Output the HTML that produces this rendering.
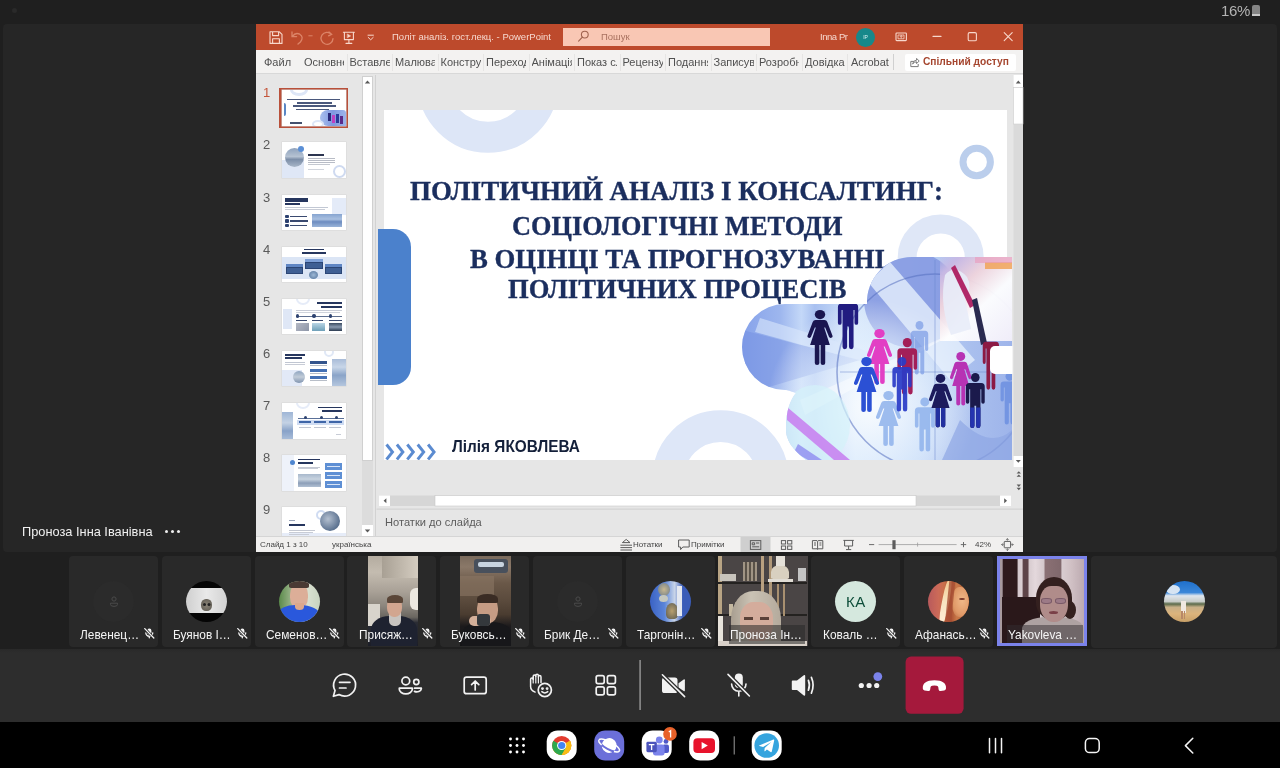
<!DOCTYPE html>
<html><head><meta charset="utf-8">
<style>
*{box-sizing:border-box;margin:0;padding:0}
html,body{width:1280px;height:768px;overflow:hidden;background:#1f1f1f;font-family:"Liberation Sans",sans-serif;}
.abs{position:absolute}
body>*{will-change:transform}
svg{position:absolute;overflow:visible}
#stage{position:absolute;left:3px;top:23.5px;width:1274px;height:528px;background:#262626;border-radius:4px}
#batt{position:absolute;left:1221px;top:2px;color:#b4b4b4;font-size:15px;letter-spacing:-0.3px}
#ppt{position:absolute;left:256px;top:25px;width:767px;height:527px;background:#e6e6e6;overflow:hidden}
#title{position:absolute;left:0;top:0;width:767px;height:25px;background:#bd4a2c;color:#f6d9cf;font-size:9.5px}
#title span{position:absolute;white-space:nowrap}
#tabs{position:absolute;left:0;top:25px;width:767px;height:24px;background:#f3f2f1;color:#505050;font-size:11px;border-bottom:1px solid #d8d8d8}
#tabs span{position:absolute;top:6px;white-space:nowrap;overflow:hidden;height:14px}
#status{position:absolute;left:0;top:511px;width:767px;height:16px;background:#f1f0ef;color:#444;font-size:8px;border-top:1px solid #d5d5d5}
#status span{position:absolute;white-space:nowrap;top:3px}
#slide{position:absolute;left:128px;top:85px;width:623px;height:350px;background:#fff;overflow:hidden}
.tl{font-family:"Liberation Serif",serif;font-weight:bold;color:#1b2e5e;-webkit-text-stroke:0.35px #1b2e5e;position:absolute;white-space:nowrap;transform-origin:0 0;font-size:28px;line-height:28px}
.tile{position:absolute;top:556px;width:89px;height:91px;background:#292929;border-radius:4px;overflow:hidden}
.nm{position:absolute;left:11px;top:626.5px;color:#f4f4f4;font-size:12.2px;white-space:nowrap;line-height:16px;transform:scaleX(0.975);transform-origin:0 0}
#bar{position:absolute;left:0;top:649px;width:1280px;height:73px;background:linear-gradient(#292929,#2d2d2d 4px)}
#nav{position:absolute;left:0;top:722px;width:1280px;height:46px;background:#000}
</style></head><body>
<div id="batt">16%</div>
<div class="abs" style="left:1252px;top:5px;width:8px;height:11px;background:#858585;border-radius:2px 2px 1px 1px"></div>
<div class="abs" style="left:1252px;top:14px;width:8px;height:2px;background:#c8c8c8"></div>
<div class="abs" style="left:12px;top:8px;width:5px;height:5px;border-radius:50%;background:#2a2a2a"></div>
<div id="stage"></div>
<div class="abs" style="left:22px;top:524px;color:#f0f0f0;font-size:12.8px;line-height:16px;white-space:nowrap" id="pres">Проноза Інна Іванівна</div>
<div class="abs" style="left:164.6px;top:529.8px;width:3.4px;height:3.4px;border-radius:50%;background:#eee;box-shadow:6px 0 0 #eee,12px 0 0 #eee"></div>

<div class="abs" id="tstrip" style="left:256px;top:24px;width:767px;height:2px;background:#bd4a2c"></div>
<div id="ppt">
 <div id="title">
  <span style="left:136px;top:6px" id="ttxt">Політ аналіз. гост.лекц.  -  PowerPoint</span>
  <div class="abs" style="left:307px;top:3px;width:207px;height:18px;background:#f9c7b4"></div>
  <span style="left:345px;top:6px;color:#a8715f" id="srch">Пошук</span>
  <span style="left:564px;top:6px;letter-spacing:-0.45px" id="inna">Inna Pr</span>
  <div class="abs" style="left:600px;top:2.5px;width:19px;height:19px;border-radius:50%;background:#17888a;color:#d8f0f0;font-size:5px;text-align:center;line-height:19px">IP</div>
 </div>
 <div id="tabs">
  <span style="left:8px">Файл</span>
  <span style="left:48px;width:40px">Основне</span>
  <span style="left:93.5px;width:40px">Вставлення</span>
  <span style="left:139px;width:40px">Малювання</span>
  <span style="left:184.5px;width:40px">Конструктор</span>
  <span style="left:230px;width:40px">Переходи</span>
  <span style="left:275.5px;width:40px">Анімація</span>
  <span style="left:321px;width:40px">Показ слайдів</span>
  <span style="left:366.5px;width:40px">Рецензування</span>
  <span style="left:412px;width:40px">Подання</span>
  <span style="left:457.5px;width:40px">Записування</span>
  <span style="left:503px;width:40px">Розробник</span>
  <span style="left:549px;width:40px">Довідка</span>
  <span style="left:595px;width:40px">Acrobat</span>
<div class="abs tsep" style="left:90.5px;top:4px;width:1px;height:17px;background:#e6e5e4"></div><div class="abs tsep" style="left:136.0px;top:4px;width:1px;height:17px;background:#e6e5e4"></div><div class="abs tsep" style="left:181.5px;top:4px;width:1px;height:17px;background:#e6e5e4"></div><div class="abs tsep" style="left:227.0px;top:4px;width:1px;height:17px;background:#e6e5e4"></div><div class="abs tsep" style="left:272.5px;top:4px;width:1px;height:17px;background:#e6e5e4"></div><div class="abs tsep" style="left:318.0px;top:4px;width:1px;height:17px;background:#e6e5e4"></div><div class="abs tsep" style="left:363.5px;top:4px;width:1px;height:17px;background:#e6e5e4"></div><div class="abs tsep" style="left:409.0px;top:4px;width:1px;height:17px;background:#e6e5e4"></div><div class="abs tsep" style="left:454.5px;top:4px;width:1px;height:17px;background:#e6e5e4"></div><div class="abs tsep" style="left:500.0px;top:4px;width:1px;height:17px;background:#e6e5e4"></div><div class="abs tsep" style="left:545.5px;top:4px;width:1px;height:17px;background:#e6e5e4"></div><div class="abs tsep" style="left:591.0px;top:4px;width:1px;height:17px;background:#e6e5e4"></div>
  <div class="abs" style="left:637px;top:4px;width:1px;height:16px;background:#d0d0d0"></div>
  <div class="abs" style="left:649px;top:4px;width:111px;height:17px;background:#fff;border-radius:2px"></div>
  <span style="left:667px;top:6px;color:#a5452e;font-weight:bold;font-size:10.2px" id="share">Спільний доступ</span>
 </div>
 <!-- thumbnails panel -->
 <div id="thumbs" class="abs" style="left:0;top:0;width:106px;height:512px;overflow:hidden"><div class="abs" style="left:7px;top:61.2px;font-size:13px;line-height:14px;color:#c4553a">1</div>
<div class="abs" style="left:23px;top:62.650000000000006px;width:68.5px;height:40.5px;background:#b9503a;"></div>
<div class="abs" style="left:25.7px;top:65.2px;width:64px;height:35.5px;background:#fff;overflow:hidden;box-shadow:0 0 0 0.5px #d6d6d6"><div class="abs" style="left:8px;top:-6px;width:18px;height:12px;background:transparent;border:3px solid #dde6f7;border-radius:50%"></div><div class="abs" style="left:2px;top:13px;width:2.5px;height:13px;background:#5a86c4;border-radius:0 2px 2px 0"></div><div class="abs" style="left:5px;top:8.5px;width:53px;height:1.6px;background:#4a587c;"></div><div class="abs" style="left:15px;top:12px;width:35px;height:1.6px;background:#4a587c;"></div><div class="abs" style="left:11px;top:15.3px;width:43px;height:1.6px;background:#4a587c;"></div><div class="abs" style="left:14px;top:18.6px;width:33px;height:1.6px;background:#4a587c;"></div><div class="abs" style="left:38px;top:20px;width:26px;height:15.5px;background:linear-gradient(90deg,#a9c0ee,#7f98e0 50%,#9db4ea);border-radius:8px 3px 0 8px"></div><div class="abs" style="left:46px;top:23px;width:3px;height:8px;background:#2a2a7a;"></div><div class="abs" style="left:50px;top:25px;width:3px;height:8px;background:#c040c0;"></div><div class="abs" style="left:54px;top:24px;width:3px;height:9px;background:#2a3a9a;"></div><div class="abs" style="left:58px;top:26px;width:3px;height:8px;background:#5a2a8a;"></div><div class="abs" style="left:8px;top:32px;width:12px;height:1.5px;background:#44506e;"></div><div class="abs" style="left:30px;top:30px;width:12px;height:8px;background:transparent;border:2.5px solid #dde6f7;border-radius:50%"></div></div>
<div class="abs" style="left:7px;top:113.3px;font-size:13px;line-height:14px;color:#5a5a5a">2</div>
<div class="abs" style="left:25.7px;top:117.3px;width:64px;height:35.5px;background:#fff;overflow:hidden;box-shadow:0 0 0 0.5px #d6d6d6"><div class="abs" style="left:0px;top:18px;width:22px;height:17.5px;background:#dfe7f6;"></div><div class="abs" style="left:3.5px;top:6px;width:19px;height:19px;background:linear-gradient(#8ea2bd,#b5c2d2 45%,#7c8ea8 60%,#a8b6c8);border-radius:50%"></div><div class="abs" style="left:16px;top:3.5px;width:6px;height:6px;background:#5b8fd6;border-radius:50%"></div><div class="abs" style="left:26px;top:11.5px;width:16px;height:2px;background:#2c3550;"></div><div class="abs" style="left:26px;top:15.5px;width:27px;height:1px;background:#b8bcc6;"></div><div class="abs" style="left:26px;top:17.5px;width:27px;height:1px;background:#b8bcc6;"></div><div class="abs" style="left:26px;top:19.5px;width:27px;height:1px;background:#b8bcc6;"></div><div class="abs" style="left:26px;top:21.5px;width:22px;height:1px;background:#c4c8d0;"></div><div class="abs" style="left:26px;top:26.5px;width:16px;height:1px;background:#d0d4dc;"></div><div class="abs" style="left:51px;top:23px;width:13px;height:13px;background:transparent;border:2.5px solid #cfdaf0;border-radius:50%"></div></div>
<div class="abs" style="left:7px;top:165.5px;font-size:13px;line-height:14px;color:#5a5a5a">3</div>
<div class="abs" style="left:25.7px;top:169.5px;width:64px;height:35.5px;background:#fff;overflow:hidden;box-shadow:0 0 0 0.5px #d6d6d6"><div class="abs" style="left:50px;top:3px;width:14px;height:17px;background:#e4ebf8;"></div><div class="abs" style="left:3px;top:3px;width:23px;height:2px;background:#26365e;"></div><div class="abs" style="left:3px;top:5.5px;width:23px;height:2px;background:#26365e;"></div><div class="abs" style="left:3px;top:8.5px;width:15px;height:1.5px;background:#26365e;"></div><div class="abs" style="left:3px;top:12.5px;width:43px;height:1px;background:#c2c8d4;"></div><div class="abs" style="left:3px;top:14.5px;width:40px;height:1px;background:#c8ccd6;"></div><div class="abs" style="left:3px;top:20px;width:4px;height:3.5px;background:#2d4270;border-radius:1px"></div><div class="abs" style="left:3px;top:24.5px;width:4px;height:3.5px;background:#2d4270;border-radius:1px"></div><div class="abs" style="left:3px;top:29px;width:4px;height:3.5px;background:#2d4270;border-radius:1px"></div><div class="abs" style="left:8.5px;top:21px;width:17px;height:1.6px;background:#3a4a70;"></div><div class="abs" style="left:8.5px;top:25.5px;width:18px;height:1.6px;background:#3a4a70;"></div><div class="abs" style="left:8.5px;top:30px;width:17px;height:1.6px;background:#3a4a70;"></div><div class="abs" style="left:30px;top:19.5px;width:30px;height:12.5px;background:linear-gradient(#86a4d0,#a9c0e0 40%,#6d8cc0 60%,#9ab4d8);"></div></div>
<div class="abs" style="left:7px;top:217.6px;font-size:13px;line-height:14px;color:#5a5a5a">4</div>
<div class="abs" style="left:25.7px;top:221.6px;width:64px;height:35.5px;background:#fff;overflow:hidden;box-shadow:0 0 0 0.5px #d6d6d6"><div class="abs" style="left:0px;top:10px;width:64px;height:22px;background:#dbe5f5;"></div><div class="abs" style="left:22px;top:2px;width:20px;height:1.8px;background:#26365e;"></div><div class="abs" style="left:20px;top:5.5px;width:24px;height:1.8px;background:#26365e;"></div><div class="abs" style="left:23px;top:15.5px;width:18px;height:6.5px;background:#3e5f94;border:0.5px solid #2b4676"></div><div class="abs" style="left:4px;top:20.5px;width:17px;height:7px;background:#3e5f94;border:0.5px solid #2b4676"></div><div class="abs" style="left:43.5px;top:20.5px;width:17px;height:7px;background:#3e5f94;border:0.5px solid #2b4676"></div><div class="abs" style="left:4px;top:17.5px;width:17px;height:2.5px;background:#5f86c4;"></div><div class="abs" style="left:43.5px;top:17.5px;width:17px;height:2.5px;background:#5f86c4;"></div><div class="abs" style="left:23px;top:12.5px;width:18px;height:2.5px;background:#7da0d8;"></div><div class="abs" style="left:27.5px;top:24.5px;width:9px;height:8px;background:radial-gradient(#9db8d6,#4f7098);border-radius:50%"></div></div>
<div class="abs" style="left:7px;top:269.8px;font-size:13px;line-height:14px;color:#5a5a5a">5</div>
<div class="abs" style="left:25.7px;top:273.8px;width:64px;height:35.5px;background:#fff;overflow:hidden;box-shadow:0 0 0 0.5px #d6d6d6"><div class="abs" style="left:14px;top:-6px;width:14px;height:12px;background:transparent;border:2.5px solid #e6ecf8;border-radius:50%"></div><div class="abs" style="left:1px;top:10px;width:9px;height:20px;background:#dfe7f6;"></div><div class="abs" style="left:35px;top:3.5px;width:25px;height:1.8px;background:#26365e;"></div><div class="abs" style="left:39px;top:7px;width:21px;height:1.8px;background:#26365e;"></div><div class="abs" style="left:14px;top:11.5px;width:46px;height:0.8px;background:#c8ccd6;"></div><div class="abs" style="left:14px;top:13px;width:44px;height:0.8px;background:#d0d4dc;"></div><div class="abs" style="left:14px;top:17px;width:46px;height:0.6px;background:#5f7090;"></div><div class="abs" style="left:14px;top:15.5px;width:3.5px;height:3.5px;background:#2d4270;border-radius:50%"></div><div class="abs" style="left:30.5px;top:15.5px;width:3.5px;height:3.5px;background:#2d4270;border-radius:50%"></div><div class="abs" style="left:47px;top:15.5px;width:3.5px;height:3.5px;background:#2d4270;border-radius:50%"></div><div class="abs" style="left:14px;top:21px;width:11px;height:1.5px;background:#36466c;"></div><div class="abs" style="left:30.5px;top:21px;width:11px;height:1.5px;background:#36466c;"></div><div class="abs" style="left:47px;top:21px;width:13px;height:1.5px;background:#36466c;"></div><div class="abs" style="left:14px;top:24.5px;width:13px;height:7.5px;background:linear-gradient(135deg,#b4b8c4,#8e96a8);"></div><div class="abs" style="left:30.5px;top:24.5px;width:13px;height:7.5px;background:linear-gradient(#b8d4e4,#6ea0b8);"></div><div class="abs" style="left:47px;top:24.5px;width:13px;height:7.5px;background:linear-gradient(#3a4a60,#8a9ab0 50%,#2a3a50);"></div></div>
<div class="abs" style="left:7px;top:321.9px;font-size:13px;line-height:14px;color:#5a5a5a">6</div>
<div class="abs" style="left:25.7px;top:325.9px;width:64px;height:35.5px;background:#fff;overflow:hidden;box-shadow:0 0 0 0.5px #d6d6d6"><div class="abs" style="left:42px;top:-4px;width:10px;height:10px;background:transparent;border:2px solid #e0e8f6;border-radius:50%"></div><div class="abs" style="left:3px;top:3px;width:20px;height:1.7px;background:#26365e;"></div><div class="abs" style="left:3px;top:6px;width:17px;height:1.7px;background:#26365e;"></div><div class="abs" style="left:3px;top:11px;width:20px;height:1px;background:#c0c6d2;"></div><div class="abs" style="left:3px;top:13px;width:20px;height:1px;background:#c8ccd6;"></div><div class="abs" style="left:0px;top:19px;width:20px;height:16.5px;background:#e2e9f7;"></div><div class="abs" style="left:11px;top:20px;width:12.5px;height:12.5px;background:linear-gradient(#8fa5c0,#c2ccd8 50%,#8094b0);border-radius:50%"></div><div class="abs" style="left:28px;top:10.5px;width:17px;height:3px;background:#33548c;"></div><div class="abs" style="left:28px;top:18px;width:17px;height:3px;background:#4470b4;"></div><div class="abs" style="left:28px;top:25.5px;width:17px;height:3px;background:#4470b4;"></div><div class="abs" style="left:28px;top:14.5px;width:17px;height:0.9px;background:#b8bec8;"></div><div class="abs" style="left:28px;top:22px;width:17px;height:0.9px;background:#b8bec8;"></div><div class="abs" style="left:28px;top:29.5px;width:17px;height:0.9px;background:#b8bec8;"></div><div class="abs" style="left:50.5px;top:8px;width:13.5px;height:27.5px;background:linear-gradient(#a9bcd8,#c8d6e8 30%,#8aa4c8 60%,#b4c6de);"></div></div>
<div class="abs" style="left:7px;top:374.1px;font-size:13px;line-height:14px;color:#5a5a5a">7</div>
<div class="abs" style="left:25.7px;top:378.1px;width:64px;height:35.5px;background:#fff;overflow:hidden;box-shadow:0 0 0 0.5px #d6d6d6"><div class="abs" style="left:14px;top:-6px;width:14px;height:12px;background:transparent;border:2.5px solid #e6ecf8;border-radius:50%"></div><div class="abs" style="left:0px;top:9px;width:11px;height:26.5px;background:linear-gradient(#9fb6d6,#c4d2e4 40%,#88a2c8 70%,#a8bcd8);"></div><div class="abs" style="left:36px;top:3.5px;width:24px;height:1.7px;background:#26365e;"></div><div class="abs" style="left:40px;top:6.8px;width:20px;height:1.7px;background:#26365e;"></div><div class="abs" style="left:16px;top:14.5px;width:46px;height:0.7px;background:#5a7098;"></div><div class="abs" style="left:22px;top:13px;width:3px;height:3px;background:#2d4270;border-radius:50%"></div><div class="abs" style="left:38px;top:13px;width:3px;height:3px;background:#2d4270;border-radius:50%"></div><div class="abs" style="left:53px;top:13px;width:3px;height:3px;background:#2d4270;border-radius:50%"></div><div class="abs" style="left:15px;top:17px;width:47px;height:4.5px;background:#cfdcf2;"></div><div class="abs" style="left:17px;top:18.3px;width:12px;height:1.6px;background:#3f66a8;"></div><div class="abs" style="left:32px;top:18.3px;width:12px;height:1.6px;background:#3f66a8;"></div><div class="abs" style="left:47px;top:18.3px;width:13px;height:1.6px;background:#3f66a8;"></div><div class="abs" style="left:17px;top:24px;width:12px;height:0.9px;background:#c0c6d2;"></div><div class="abs" style="left:32px;top:24px;width:12px;height:0.9px;background:#c0c6d2;"></div><div class="abs" style="left:47px;top:24px;width:12px;height:0.9px;background:#c0c6d2;"></div><div class="abs" style="left:54px;top:31px;width:5px;height:0.8px;background:#c8ccd6;"></div></div>
<div class="abs" style="left:7px;top:426.2px;font-size:13px;line-height:14px;color:#5a5a5a">8</div>
<div class="abs" style="left:25.7px;top:430.2px;width:64px;height:35.5px;background:#fff;overflow:hidden;box-shadow:0 0 0 0.5px #d6d6d6"><div class="abs" style="left:0px;top:0px;width:12px;height:35.5px;background:#eef2fa;"></div><div class="abs" style="left:8px;top:5px;width:5px;height:5px;background:#4f86d0;border-radius:50%"></div><div class="abs" style="left:16px;top:3.5px;width:22px;height:1.7px;background:#26365e;"></div><div class="abs" style="left:16px;top:6.8px;width:15px;height:1.7px;background:#26365e;"></div><div class="abs" style="left:16px;top:11.5px;width:22px;height:0.9px;background:#c4c8d2;"></div><div class="abs" style="left:16px;top:13.3px;width:20px;height:0.9px;background:#c8ccd6;"></div><div class="abs" style="left:16px;top:18.5px;width:23px;height:13.5px;background:linear-gradient(#a8b8cc,#c8d4e0 40%,#8c9eb8 70%,#b0bfd2);"></div><div class="abs" style="left:43px;top:8px;width:17px;height:6.5px;background:#5e8fd4;"></div><div class="abs" style="left:43px;top:17px;width:17px;height:6.5px;background:#5e8fd4;"></div><div class="abs" style="left:43px;top:26px;width:17px;height:6.5px;background:#5e8fd4;"></div><div class="abs" style="left:45px;top:10.5px;width:13px;height:1.4px;background:#d8e4f6;"></div><div class="abs" style="left:45px;top:19.5px;width:13px;height:1.4px;background:#d8e4f6;"></div><div class="abs" style="left:45px;top:28.5px;width:13px;height:1.4px;background:#d8e4f6;"></div></div>
<div class="abs" style="left:7px;top:478.4px;font-size:13px;line-height:14px;color:#5a5a5a">9</div>
<div class="abs" style="left:25.7px;top:482.4px;width:64px;height:35.5px;background:#fff;overflow:hidden;box-shadow:0 0 0 0.5px #d6d6d6"><div class="abs" style="left:0px;top:26px;width:64px;height:10px;background:#e6ecf8;"></div><div class="abs" style="left:34px;top:3px;width:10px;height:10px;background:transparent;border:2.5px solid #d0dcf2;border-radius:50%"></div><div class="abs" style="left:38px;top:3.5px;width:20px;height:20px;background:radial-gradient(circle at 40% 40%,#b4c0d0,#5c7290 70%,#40587a);border-radius:50%"></div><div class="abs" style="left:7px;top:13px;width:6px;height:1px;background:#9aa4b8;"></div><div class="abs" style="left:7px;top:16.5px;width:16px;height:2.4px;background:#26365e;"></div><div class="abs" style="left:7px;top:23px;width:26px;height:0.9px;background:#c4c8d2;"></div><div class="abs" style="left:7px;top:25px;width:24px;height:0.9px;background:#c8ccd6;"></div><div class="abs" style="left:7px;top:27px;width:20px;height:0.9px;background:#c8ccd6;"></div></div></div>
 <!-- scrollbars -->
 <div class="abs" style="left:106px;top:51px;width:11px;height:462px;background:#dcdcdc"></div>
 <div class="abs" style="left:106px;top:51px;width:11px;height:385px;background:#fff;border:1px solid #d0d0d0"></div>
 <div class="abs" style="left:106px;top:500px;width:11px;height:12px;background:#fff"></div>
 <div class="abs" style="left:119px;top:50px;width:1px;height:462px;background:#d2d2d2"></div>
 <div id="slide">
  <svg width="623" height="350" viewBox="0 0 623 350" style="left:0;top:0">
   <circle cx="104" cy="-27.7" r="55" fill="none" stroke="#dde6f7" stroke-width="31"/>
   <circle cx="592.7" cy="52" r="13.7" fill="none" stroke="#bbceec" stroke-width="7"/>
   <circle cx="556.7" cy="147.5" r="33.55" fill="none" stroke="#dfe7f7" stroke-width="18.9"/>
   <circle cx="336.6" cy="368.4" r="52.3" fill="none" stroke="#dee7f8" stroke-width="31.6"/>
   <g fill="none" stroke="#5b8bd0" stroke-width="2.9">
    <path d="M2.5 334.5 l6 7.5 l-6 7.5"/><path d="M12.9 334.5 l6 7.5 l-6 7.5"/><path d="M23.3 334.5 l6 7.5 l-6 7.5"/><path d="M33.7 334.5 l6 7.5 l-6 7.5"/><path d="M44.1 334.5 l6 7.5 l-6 7.5"/>
   </g>
  </svg>
  <div class="tl" id="l1" style="left:26px;top:67px;transform:scaleX(0.963)">ПОЛІТИЧНИЙ АНАЛІЗ І КОНСАЛТИНГ:</div>
  <div class="tl" id="l2" style="left:127.5px;top:103.4px;font-size:27px;line-height:27px;transform:scaleX(0.975)">СОЦІОЛОГІЧНІ МЕТОДИ</div>
  <div class="tl" id="l3" style="left:85.5px;top:135.9px;font-size:27px;line-height:27px;transform:scaleX(0.991)">В ОЦІНЦІ ТА ПРОГНОЗУВАННІ</div>
  <div class="tl" id="l4" style="left:123.5px;top:165.9px;font-size:27px;line-height:27px;transform:scaleX(0.985)">ПОЛІТИЧНИХ ПРОЦЕСІВ</div>
  <div class="abs" id="auth" style="left:67.7px;top:326.3px;transform:scaleX(0.932);font-weight:bold;font-size:16.5px;line-height:20px;color:#14203a;white-space:nowrap;transform-origin:0 0">Лілія ЯКОВЛЕВА</div>
 </div>
 <div class="abs" style="left:122px;top:203.5px;width:32.5px;height:156px;background:#4b81cc;border-radius:0 18px 18px 0"></div>

 <div class="abs" id="notes" style="left:129px;top:490.2px;font-size:11.1px;line-height:14px;color:#5c5c5c;white-space:nowrap">Нотатки до слайда</div>
 <div id="status">
  <span style="left:4px">Слайд 1 з 10</span>
  <span style="left:76px">українська</span>
  <span style="left:377px">Нотатки</span>
  <span style="left:435px">Примітки</span>
  <span style="left:719px">42%</span>
 </div>
</div>
<svg id="chrome" width="1280" height="768" viewBox="0 0 1280 768" style="left:0;top:0;pointer-events:none">
<g fill="none" stroke="#f8d8cc" stroke-width="1.1" stroke-linejoin="round" stroke-linecap="round">
 <!-- save -->
 <path d="M270 31.800 h9.400 l2.600 2.600 v9 h-12 z M272.600 31.800 v3.800 h6 v-3.800 M272.600 43.400 v-4.600 h6.800 v4.600"/>
 <!-- present -->
 <path d="M343.400 32.200 h11 M344.400 32.200 v7.400 h9 v-7.400 M348.900 39.600 v3.400 M346 43.400 h5.800"/>
 <path d="M347.600 34.200 l3 1.700 l-3 1.700 z" fill="#f8d8cc" stroke-width="0.6"/>
 <!-- qat dropdown -->
 <path d="M368 35.200 h5.400 M368.200 37.400 l2.500 2.400 l2.500 -2.400" stroke-width="1"/>
 <!-- window buttons -->
 <rect x="896" y="33" width="10.400" height="7.600" rx="0.800"/><path d="M898.400 35 h5.600 v3.800 h-5.600 z M901.200 38 v-2.200 M900.200 36.600 l1 -1 l1 1" stroke-width="0.800"/>
 <path d="M933 36.400 h8"/>
 <rect x="968.200" y="32.600" width="8.200" height="8.200" rx="1.400"/>
 <path d="M1004.200 32.600 l8 8 M1012.200 32.600 l-8 8"/>
</g>
<g fill="none" stroke="#dc8468" stroke-width="1.300" stroke-linecap="round">
 <!-- undo -->
 <path d="M292 32 v4.600 h4.600 M292.400 36.400 q3 -4.400 7.400 -2.200 q4.400 3 0.600 7.800 l-2.400 2"/>
 <path d="M308.800 35.800 h3.400" stroke-width="1"/>
 <!-- redo -->
 <path d="M331.400 34.200 a6 6 0 1 0 1.600 4.400 M329 32 l2.600 2.400 l-3 1.400"/>
</g>
<!-- search icon -->
<g fill="none" stroke="#a0624e" stroke-width="1.100" stroke-linecap="round"><circle cx="584.800" cy="34.600" r="3.400"/><path d="M582.400 37.200 l-3.800 4"/></g>
<!-- share icon -->
<g fill="none" stroke="#7a7a7a" stroke-width="1" stroke-linejoin="round"><path d="M913.800 61.400 h-3 v5.200 h7.400 v-2.600 M912.600 64 q0.400 -3.600 4 -3.800 v-1.800 l2.600 2.600 l-2.600 2.600 v-1.800 q-2.400 0 -4 2.200 z"/></g>

<!-- left scrollbar arrows -->
<path d="M364.800 83.600 l2.700 -3 l2.700 3 z" fill="#5a5a5a"/>
<path d="M364.800 529.400 l2.700 3 l2.700 -3 z" fill="#5a5a5a"/>
<!-- right vertical scrollbar -->
<rect x="1013.500" y="75" width="9.500" height="392" fill="#dadada"/>
<rect x="1013.500" y="75" width="9.500" height="12" fill="#fff"/>
<rect x="1013.500" y="87.500" width="9.500" height="36.500" fill="#fff" stroke="#cfcfcf" stroke-width="0.600"/>
<path d="M1015.800 83.400 l2.500 -2.800 l2.500 2.800 z" fill="#5a5a5a"/>
<rect x="1013.500" y="456" width="9.500" height="11" fill="#fff"/>
<path d="M1015.800 460 l2.500 2.800 l2.500 -2.800 z" fill="#5a5a5a"/>
<g fill="#5a5a5a"><path d="M1016.600 473.600 l2.200 -2.400 l2.200 2.400 z M1016.600 476.800 l2.200 -2.400 l2.200 2.400 z"/><path d="M1016.600 484.600 l2.200 2.400 l2.200 -2.400 z M1016.600 487.800 l2.200 2.400 l2.200 -2.400 z"/></g>
<!-- horizontal scrollbar -->
<rect x="379" y="495.500" width="632" height="10.500" fill="#d6d6d6"/>
<rect x="379" y="495.500" width="11" height="10.500" fill="#fff"/>
<path d="M386.400 498.200 l-2.800 2.500 l2.800 2.500 z" fill="#5a5a5a"/>
<rect x="435" y="495.500" width="481" height="10.500" fill="#fff" stroke="#c8c8c8" stroke-width="0.600"/>
<rect x="1000" y="495.500" width="11" height="10.500" fill="#fff"/>
<path d="M1004.200 498.200 l2.800 2.500 l-2.800 2.500 z" fill="#5a5a5a"/>
<rect x="376.500" y="508.600" width="646.500" height="1" fill="#d0d0d0"/>

<!-- status icons -->
<g fill="none" stroke="#5c5c5c" stroke-width="1">
 <path d="M620.400 545.200 h11.600 M620.400 547.600 h11.600 M620.400 550 h11.600 M622.400 542.600 l3.800 -3.200 l3.800 3.200 z"/>
 <path d="M678.600 540 h10.600 v7 h-6.400 l-2.200 2.600 v-2.600 h-2 z"/>
</g>
<rect x="740.500" y="537" width="30" height="15" fill="#cfcfcf"/>
<g fill="none" stroke="#5c5c5c" stroke-width="1">
 <rect x="750.400" y="540.600" width="10.400" height="8.800"/><path d="M752.200 542.800 h2.400 v2 h-2.400 z M756 543 h3.200 M752.200 546.800 h7"/>
 <rect x="781.400" y="540.600" width="4.200" height="3.400"/><rect x="787.600" y="540.600" width="4.200" height="3.400"/><rect x="781.400" y="546" width="4.200" height="3.400"/><rect x="787.600" y="546" width="4.200" height="3.400"/>
 <path d="M812.400 540.600 h4.600 l0.600 0.600 l0.600 -0.600 h4.600 v8.200 h-4.600 l-0.600 0.600 l-0.600 -0.600 h-4.600 z M817.600 541.200 v8.200 M814 543 h2 M814 545 h2 M819.400 543 h2 M819.400 545 h2"/>
 <path d="M843.400 540.400 h10.400 M844.600 540.400 v5.600 h8 v-5.600 M848.600 546 v3 M846 549.600 h5.200"/>
 <path d="M869 544.600 h5.200 M960.800 544.600 h5.400 M963.500 542 v5.200" stroke="#6a6a6a"/>
 <path d="M878.600 544.600 h78 M917.600 542.600 v4" stroke="#9a9a9a" stroke-width="0.800"/>
 <rect x="892.400" y="540.200" width="3.200" height="9" fill="#5c5c5c" stroke="none"/>
 <rect x="1004.200" y="541.400" width="6.400" height="6.400" rx="0.600"/><path d="M1007.400 538.600 v2 M1007.400 548.400 v2 M1001.600 544.600 h2 M1011.200 544.600 h2 M1006.200 539.800 l1.200 -1.200 l1.200 1.200 M1006.200 549.400 l1.200 1.200 l1.200 -1.200 M1002.800 543.400 l-1.200 1.200 l1.200 1.200 M1012 543.400 l1.200 1.200 l-1.200 1.200" stroke-width="0.800"/>
</g>
</svg>
<svg id="cloud" width="1280" height="768" viewBox="0 0 1280 768" style="left:0;top:0;pointer-events:none">
<defs>
 <path id="manbody" d="M5 11 h14 a4 4 0 0 1 4 4 v17 a2 2 0 0 1 -4 0 v-14 h-1 v40 a2.5 2.5 0 0 1 -5 0 v-22 h-2 v22 a2.5 2.5 0 0 1 -5 0 v-40 h-1 v14 a2 2 0 0 1 -4 0 v-17 a4 4 0 0 1 4 -4 z"/>
 <g id="man"><circle cx="12" cy="5" r="5"/><use href="#manbody"/></g>
 <path id="manlegs" d="M6 38 h12 v20 a2.5 2.5 0 0 1 -5 0 v-20 h-2 v20 a2.5 2.5 0 0 1 -5 0 z"/>
 <g id="woman"><circle cx="12" cy="5" r="5"/><path d="M8 11 h8 a3 3 0 0 1 3 2 l5 15 a1.8 1.8 0 0 1 -3.4 1.2 l-3.6 -10 h-1 l5.5 19 h-4.5 v19.5 a2.2 2.2 0 0 1 -4.4 0 v-19.5 h-1.2 v19.5 a2.2 2.2 0 0 1 -4.4 0 v-19.5 h-4.5 l5.5 -19 h-1 l-3.6 10 a1.8 1.8 0 0 1 -3.4 -1.2 l5 -15 a3 3 0 0 1 3 -2 z"/></g>
 <path id="womanlegs" d="M7 38 h10 v19.5 a2.2 2.2 0 0 1 -4.4 0 v-19.5 h-1.2 v19.5 a2.2 2.2 0 0 1 -4.4 0 z"/>
 <clipPath id="cc"><path d="M912 257 H1012 V460 H806 C793 450 785 440 786 427 C786 412 790 400 796 393 C790 391 788 390 785 390 A43 43 0 0 1 785 304 H867 A45 45 0 0 1 912 257 Z"/></clipPath>
 <linearGradient id="cg" x1="742" y1="0" x2="1012" y2="0" gradientUnits="userSpaceOnUse">
  <stop offset="0" stop-color="#86a2ea"/><stop offset="0.14" stop-color="#9db6ee"/><stop offset="0.22" stop-color="#c4d8f8"/><stop offset="0.27" stop-color="#a8c0f0"/><stop offset="0.42" stop-color="#d2e4fa"/><stop offset="0.62" stop-color="#c0d6f6"/><stop offset="0.85" stop-color="#a9bfee"/><stop offset="1" stop-color="#9eb4ea"/>
 </linearGradient>
 <radialGradient id="glow" cx="872" cy="405" r="105" gradientUnits="userSpaceOnUse"><stop offset="0" stop-color="#fff" stop-opacity="0.9"/><stop offset="0.65" stop-color="#eaf5ff" stop-opacity="0.55"/><stop offset="1" stop-color="#fff" stop-opacity="0"/></radialGradient>
 <linearGradient id="tr" x1="935" y1="257" x2="1012" y2="340" gradientUnits="userSpaceOnUse"><stop offset="0" stop-color="#c9b9e4" stop-opacity="0"/><stop offset="0.15" stop-color="#c9b9e4"/><stop offset="0.35" stop-color="#f0d4dc"/><stop offset="0.6" stop-color="#fff"/><stop offset="1" stop-color="#f4f0fa"/></linearGradient>
</defs>
<g clip-path="url(#cc)">
 <rect x="742" y="257" width="270" height="203" fill="url(#cg)"/>
 <circle cx="912" cy="300" r="48" fill="#8297e0" opacity="0.85"/>
 <path d="M742 330 L860 360 L742 395 Z" fill="#7390e2" opacity="0.5"/>
 <rect x="742" y="257" width="270" height="203" fill="url(#glow)"/>
 <path d="M868 282 L890 262 L975 360 L950 380 Z" fill="#e6f0fd" opacity="0.8"/>
 <path d="M760 318 L870 352 L865 362 L755 332 Z" fill="#dbe8fb" opacity="0.6"/>
 <path d="M960 330 L800 400 L805 415 Z" fill="#fff" opacity="0.45"/>
 <circle cx="935" cy="372" r="98" fill="none" stroke="#5570c0" stroke-width="1.6" opacity="0.55"/>
 <path d="M935 260 V460 M840 372 H1012" stroke="#6a84cc" stroke-width="1" opacity="0.5" fill="none"/>
 <ellipse cx="815" cy="425" rx="35" ry="40" fill="#d4f2fa" opacity="0.7"/>
 <path d="M787 407 L850 460 L834 460 L787 420 Z" fill="#c888f0" opacity="0.95"/>
 <path d="M798 444 L822 460 L808 460 L794 452 Z" fill="#8f8cf0" opacity="0.8"/>
 <rect x="940" y="257" width="72" height="84" fill="url(#tr)" opacity="0.95"/>
 <path d="M945 275 q10 -12 22 2 q6 10 -2 22 l6 30 l-20 6 q-12 -30 -6 -60z" fill="#e8ecf8" opacity="0.9"/>
 <path d="M951 268 l4 -3 l20 40 l-5 3 z" fill="#b02868"/>
 <path d="M972 300 l5 -2 l10 45 l-6 2 z" fill="#2a2a50"/>
 <rect x="985" y="262" width="27" height="7" fill="#f0a050" opacity="0.8"/>
 <rect x="975" y="257" width="37" height="6" fill="#e8a0c0" opacity="0.7"/>
 <path d="M960 420 q30 30 52 10 v30 h-70 z" fill="#8ea6e4" opacity="0.7"/>
 <g transform="translate(910,321) scale(0.792,0.883)" opacity="0.75"><use href="#man" fill="#7f9fe6"/></g><g transform="translate(876,391) scale(1.042,0.917)" opacity="0.85"><use href="#woman" fill="#8fb2ec"/></g><g transform="translate(914,397.5) scale(0.900,0.892)" opacity="0.85"><use href="#man" fill="#8fb2ec"/></g><g transform="translate(999.7,372) scale(0.833,0.867)" opacity="0.9"><use href="#man" fill="#6f92e2"/></g><g transform="translate(807.5,310) scale(1.042,0.917)" opacity="1"><use href="#woman" fill="#1a1650"/></g><g transform="translate(837,293.5) scale(0.92,0.92)"><use href="#manbody" fill="#211c80"/></g><g transform="translate(867,329) scale(1.042,0.917)" opacity="1"><use href="#woman" fill="#e23fc4"/></g><g transform="translate(896.5,338) scale(0.896,0.933)" opacity="1"><use href="#man" fill="#a31f58"/></g><g transform="translate(891.5,357) scale(0.875,0.900)" opacity="0.93"><use href="#man" fill="#2a3cc8"/></g><g transform="translate(854,357) scale(1.042,0.917)" opacity="1"><use href="#woman" fill="#2b50d4"/></g><g transform="translate(950,352) scale(0.896,0.892)" opacity="1"><use href="#woman" fill="#b733b4"/></g><g transform="translate(929,374) scale(0.958,0.892)" opacity="1"><use href="#woman" fill="#1c1b5c"/><use href="#womanlegs" fill="#2230a0"/></g><g transform="translate(965,373) scale(0.858,0.908)" opacity="1"><use href="#man" fill="#1b1a4c"/><use href="#manlegs" fill="#2434b0"/></g><g transform="translate(982,331) scale(0.74,0.97)"><use href="#manbody" fill="#8c1a44"/></g>
</g>
<path d="M1012.500 346 h-17.500 a5 5 0 0 0 -5 5 v18 a5 5 0 0 0 5 5 h17.500 z" fill="#fff"/>
</svg>
<div id="tiles"><div class="tile" style="left:69.0px;">
<div class="abs" style="left:24.0px;top:24.5px;width:41px;height:41px;border-radius:50%;background:#2b2b2b;overflow:hidden;"></div></div>
<svg width="10" height="11" viewBox="0 0 10 11" style="left:108.5px;top:596px"><g fill="none" stroke="#4a4a4a" stroke-width="1"><circle cx="5" cy="3" r="2.1"/><path d="M1.5 7.2 h7 v1.2 q0 2 -3.5 2 q-3.5 0 -3.5 -2 z"/></g></svg>
<div class="nm" id="nm0" style="left:80.2px">Левенец…</div>
<svg width="10.6" height="10.6" viewBox="0 0 11 11" style="left:143.8px;top:628.4px"><g fill="none" stroke="#f4f4f4" stroke-width="1.3" stroke-linecap="round"><rect x="3.3" y="0.6" width="4.4" height="6.4" rx="2.2" fill="#f4f4f4" stroke="none"/><path d="M1.9 5 a3.6 3.6 0 0 0 7.2 0 M5.5 8.8 v1.4" stroke-width="1.4"/><path d="M1 0.8 L10 10.2" stroke="#292929" stroke-width="2.8"/><path d="M0.8 0.6 L10.2 10.4" stroke-width="1.35"/></g></svg>
<div class="tile" style="left:161.8px;">
<div class="abs" style="left:24.0px;top:24.5px;width:41px;height:41px;border-radius:50%;background:#050505;overflow:hidden;"><div class="abs" style="left:0;top:7px;width:41px;height:25px;background:linear-gradient(90deg,#cfcfcf,#e9e9e9 50%,#d2d2d2)"></div><div class="abs" style="left:15px;top:18px;width:11px;height:12px;border-radius:45%;background:radial-gradient(#8a8478,#5a564e)"></div><div class="abs" style="left:17px;top:22px;width:3px;height:3px;border-radius:50%;background:#222;box-shadow:4.5px 0 0 #222"></div></div></div>
<div class="nm" id="nm1" style="left:173.0px">Буянов І…</div>
<svg width="10.6" height="10.6" viewBox="0 0 11 11" style="left:236.6px;top:628.4px"><g fill="none" stroke="#f4f4f4" stroke-width="1.3" stroke-linecap="round"><rect x="3.3" y="0.6" width="4.4" height="6.4" rx="2.2" fill="#f4f4f4" stroke="none"/><path d="M1.9 5 a3.6 3.6 0 0 0 7.2 0 M5.5 8.8 v1.4" stroke-width="1.4"/><path d="M1 0.8 L10 10.2" stroke="#292929" stroke-width="2.8"/><path d="M0.8 0.6 L10.2 10.4" stroke-width="1.35"/></g></svg>
<div class="tile" style="left:254.6px;">
<div class="abs" style="left:24.0px;top:24.5px;width:41px;height:41px;border-radius:50%;background:linear-gradient(90deg,#5a8a4a,#9ab48a 30%,#d8e0d0 70%,#c8d4c0);overflow:hidden;"><div class="abs" style="left:11px;top:2px;width:18px;height:26px;border-radius:45%;background:#dcae98"></div><div class="abs" style="left:10px;top:-1px;width:20px;height:8px;border-radius:50% 50% 20% 20%;background:#4a3a34"></div><div class="abs" style="left:0px;top:24px;width:41px;height:20px;border-radius:40% 50% 0 0;background:#2a58dc"></div><div class="abs" style="left:16px;top:22px;width:9px;height:7px;background:#dba88e;border-radius:0 0 50% 50%"></div></div></div>
<div class="nm" id="nm2" style="left:265.8px">Семенов…</div>
<svg width="10.6" height="10.6" viewBox="0 0 11 11" style="left:329.4px;top:628.4px"><g fill="none" stroke="#f4f4f4" stroke-width="1.3" stroke-linecap="round"><rect x="3.3" y="0.6" width="4.4" height="6.4" rx="2.2" fill="#f4f4f4" stroke="none"/><path d="M1.9 5 a3.6 3.6 0 0 0 7.2 0 M5.5 8.8 v1.4" stroke-width="1.4"/><path d="M1 0.8 L10 10.2" stroke="#292929" stroke-width="2.8"/><path d="M0.8 0.6 L10.2 10.4" stroke-width="1.35"/></g></svg>
<div class="tile" style="left:347.4px;">
<div class="abs" style="left:20.5px;top:0;width:50px;height:90px;background:linear-gradient(#b4aca0,#c4bcb0 18%,#a8a096 40%,#8d877e 55%,#6a6660 68%,#2a2c34 74%,#1c1e28);overflow:hidden"><div class="abs" style="left:14px;top:0;width:36px;height:22px;background:linear-gradient(90deg,#a8a094,#d4ccc0)"></div><div class="abs" style="left:0;top:48px;width:12px;height:22px;background:#d8d4cc"></div><div class="abs" style="left:42px;top:32px;width:8px;height:22px;background:#ece8e0;border-radius:6px 0 0 6px"></div><div class="abs" style="left:3px;top:60px;width:46px;height:34px;background:#1e2230;border-radius:40% 40% 0 0"></div><div class="abs" style="left:21px;top:56px;width:12px;height:14px;background:#c8c4c0;border-radius:0 0 40% 40%"></div><div class="abs" style="left:19.5px;top:41px;width:15px;height:20px;background:#d2a690;border-radius:45%"></div><div class="abs" style="left:19px;top:39px;width:16px;height:8px;background:#5a4638;border-radius:50% 50% 10% 10%"></div></div></div>
<div class="nm" id="nm3" style="left:358.6px">Присяж…</div>
<svg width="10.6" height="10.6" viewBox="0 0 11 11" style="left:422.2px;top:628.4px"><g fill="none" stroke="#f4f4f4" stroke-width="1.3" stroke-linecap="round"><rect x="3.3" y="0.6" width="4.4" height="6.4" rx="2.2" fill="#f4f4f4" stroke="none"/><path d="M1.9 5 a3.6 3.6 0 0 0 7.2 0 M5.5 8.8 v1.4" stroke-width="1.4"/><path d="M1 0.8 L10 10.2" stroke="#292929" stroke-width="2.8"/><path d="M0.8 0.6 L10.2 10.4" stroke-width="1.35"/></g></svg>
<div class="tile" style="left:440.2px;">
<div class="abs" style="left:19.5px;top:0;width:51px;height:90px;background:linear-gradient(#7a6a5c,#8a7868 12%,#6a5848 30%,#5a4a3c 50%,#4a3c30 65%,#1c1a1c 78%,#141416);overflow:hidden"><div class="abs" style="left:14px;top:3px;width:34px;height:14px;background:#48505c;border-radius:3px"></div><div class="abs" style="left:18px;top:6px;width:26px;height:5px;background:#c8d4e0;border-radius:2px"></div><div class="abs" style="left:0;top:20px;width:34px;height:20px;background:#8a7664;opacity:.6"></div><div class="abs" style="left:2px;top:66px;width:50px;height:30px;background:#17171a;border-radius:40% 40% 0 0"></div><div class="abs" style="left:17px;top:40px;width:21px;height:27px;background:#c69c84;border-radius:45%"></div><div class="abs" style="left:17px;top:38px;width:21px;height:9px;background:#3a2c24;border-radius:50% 50% 10% 10%"></div><div class="abs" style="left:9px;top:60px;width:22px;height:10px;background:#d4b09a;border-radius:5px"></div><div class="abs" style="left:17px;top:58px;width:13px;height:12px;background:#34383c;border-radius:3px"></div></div></div>
<div class="nm" id="nm4" style="left:451.4px">Буковсь…</div>
<svg width="10.6" height="10.6" viewBox="0 0 11 11" style="left:515.0px;top:628.4px"><g fill="none" stroke="#f4f4f4" stroke-width="1.3" stroke-linecap="round"><rect x="3.3" y="0.6" width="4.4" height="6.4" rx="2.2" fill="#f4f4f4" stroke="none"/><path d="M1.9 5 a3.6 3.6 0 0 0 7.2 0 M5.5 8.8 v1.4" stroke-width="1.4"/><path d="M1 0.8 L10 10.2" stroke="#292929" stroke-width="2.8"/><path d="M0.8 0.6 L10.2 10.4" stroke-width="1.35"/></g></svg>
<div class="tile" style="left:533.0px;">
<div class="abs" style="left:24.0px;top:24.5px;width:41px;height:41px;border-radius:50%;background:#2b2b2b;overflow:hidden;"></div></div>
<svg width="10" height="11" viewBox="0 0 10 11" style="left:572.5px;top:596px"><g fill="none" stroke="#4a4a4a" stroke-width="1"><circle cx="5" cy="3" r="2.1"/><path d="M1.5 7.2 h7 v1.2 q0 2 -3.5 2 q-3.5 0 -3.5 -2 z"/></g></svg>
<div class="nm" id="nm5" style="left:544.2px">Брик Де…</div>
<svg width="10.6" height="10.6" viewBox="0 0 11 11" style="left:607.8px;top:628.4px"><g fill="none" stroke="#f4f4f4" stroke-width="1.3" stroke-linecap="round"><rect x="3.3" y="0.6" width="4.4" height="6.4" rx="2.2" fill="#f4f4f4" stroke="none"/><path d="M1.9 5 a3.6 3.6 0 0 0 7.2 0 M5.5 8.8 v1.4" stroke-width="1.4"/><path d="M1 0.8 L10 10.2" stroke="#292929" stroke-width="2.8"/><path d="M0.8 0.6 L10.2 10.4" stroke-width="1.35"/></g></svg>
<div class="tile" style="left:625.8px;">
<div class="abs" style="left:24.0px;top:24.5px;width:41px;height:41px;border-radius:50%;background:linear-gradient(90deg,#3a62c4,#5a84d8 35%,#c8d4e8 60%,#3a5cb8 80%);overflow:hidden;"><div class="abs" style="left:8px;top:2px;width:12px;height:13px;border-radius:50%;background:radial-gradient(#c8b890,#6a7a8a)"></div><div class="abs" style="left:16px;top:22px;width:12px;height:16px;border-radius:50% 50% 30% 30%;background:radial-gradient(#b8a070,#5a5a50)"></div><div class="abs" style="left:9px;top:14px;width:9px;height:7px;border-radius:50%;background:#c4c8c0"></div><div class="abs" style="left:27px;top:5px;width:5px;height:30px;background:#e4e8f0"></div></div></div>
<div class="nm" id="nm6" style="left:637.0px">Таргонін…</div>
<svg width="10.6" height="10.6" viewBox="0 0 11 11" style="left:700.6px;top:628.4px"><g fill="none" stroke="#f4f4f4" stroke-width="1.3" stroke-linecap="round"><rect x="3.3" y="0.6" width="4.4" height="6.4" rx="2.2" fill="#f4f4f4" stroke="none"/><path d="M1.9 5 a3.6 3.6 0 0 0 7.2 0 M5.5 8.8 v1.4" stroke-width="1.4"/><path d="M1 0.8 L10 10.2" stroke="#292929" stroke-width="2.8"/><path d="M0.8 0.6 L10.2 10.4" stroke-width="1.35"/></g></svg>
<div class="tile" style="left:718.6px;border-radius:0;width:90px;left:718px;height:90.4px;">
<div class="abs" style="left:0;top:0;width:90px;height:90.4px;background:#4a4545;overflow:hidden"><div class="abs" style="left:0;top:0;width:4px;height:90px;background:#b8a484"></div><div class="abs" style="left:0;top:26px;width:89px;height:2px;background:#242220"></div><div class="abs" style="left:0;top:58px;width:89px;height:2px;background:#242220"></div><div class="abs" style="left:43px;top:0;width:3px;height:62px;background:#b8a080"></div><div class="abs" style="left:51px;top:0;width:3px;height:62px;background:#b09878"></div><div class="abs" style="left:59px;top:28px;width:2px;height:32px;background:#a89070"></div><div class="abs" style="left:65px;top:28px;width:2px;height:32px;background:#a89070"></div><div class="abs" style="left:25px;top:6px;width:14px;height:19px;background:repeating-linear-gradient(90deg,#a09484 0 2px,#5a5248 2px 4px)"></div><div class="abs" style="left:2px;top:18px;width:16px;height:7px;background:#c8c4bc"></div><div class="abs" style="left:53px;top:9px;width:18px;height:14px;background:#d8d0c0;border-radius:50% 50% 10% 10%"></div><div class="abs" style="left:58px;top:0px;width:9px;height:10px;background:#e4e0d8"></div><div class="abs" style="left:50px;top:23px;width:25px;height:3px;background:#e0dcd4"></div><div class="abs" style="left:80px;top:12px;width:8px;height:13px;background:#c4c4c4"></div><div class="abs" style="left:11px;top:48px;width:4px;height:12px;background:#c4b8a0"></div><div class="abs" style="left:17px;top:46px;width:4px;height:14px;background:#8a8070"></div><div class="abs" style="left:0px;top:60px;width:5px;height:30px;background:#e8e4dc"></div><div class="abs" style="left:13px;top:35px;width:50px;height:62px;background:linear-gradient(90deg,#a89e90,#cac2b4 40%,#b4aa9c);border-radius:45% 45% 20% 20%"></div><div class="abs" style="left:22px;top:46px;width:33px;height:40px;background:#d4ac9c;border-radius:40% 40% 45% 45%"></div><div class="abs" style="left:26px;top:61px;width:9px;height:2.5px;background:#5a4038"></div><div class="abs" style="left:42px;top:61px;width:9px;height:2.5px;background:#5a4038"></div><div class="abs" style="left:0;top:85px;width:89px;height:5px;background:#d8d0c8"></div><div class="abs" style="left:11px;top:69px;width:76px;height:19px;background:rgba(40,40,40,.55)"></div></div></div>
<div class="nm" id="nm7" style="left:729.8px">Проноза Ін…</div>
<div class="tile" style="left:811.4px;">
<div class="abs" style="left:24.0px;top:24.5px;width:41px;height:41px;border-radius:50%;background:#d5e8de;overflow:hidden;color:#0e4e3a;font-size:15px;text-align:center;line-height:41px;letter-spacing:0.5px">КА</div></div>
<div class="nm" id="nm8" style="left:822.6px">Коваль …</div>
<svg width="10.6" height="10.6" viewBox="0 0 11 11" style="left:886.2px;top:628.4px"><g fill="none" stroke="#f4f4f4" stroke-width="1.3" stroke-linecap="round"><rect x="3.3" y="0.6" width="4.4" height="6.4" rx="2.2" fill="#f4f4f4" stroke="none"/><path d="M1.9 5 a3.6 3.6 0 0 0 7.2 0 M5.5 8.8 v1.4" stroke-width="1.4"/><path d="M1 0.8 L10 10.2" stroke="#292929" stroke-width="2.8"/><path d="M0.8 0.6 L10.2 10.4" stroke-width="1.35"/></g></svg>
<div class="tile" style="left:904.2px;">
<div class="abs" style="left:24.0px;top:24.5px;width:41px;height:41px;border-radius:50%;background:linear-gradient(90deg,#b85a5c,#cc6a58 25%,#c8704a 40%,#a84c30 55%,#c87848 70%,#b86038);overflow:hidden;"><div class="abs" style="left:24px;top:6px;width:17px;height:30px;background:radial-gradient(ellipse at 60% 45%,#f0b888,#e09a68 60%,#b86840);border-radius:45% 50% 55% 45%"></div><div class="abs" style="left:14px;top:-2px;width:7px;height:46px;background:linear-gradient(#f0c890,#f8e4c0 50%,#fff0d8);border-radius:40%;transform:rotate(11deg)"></div><div class="abs" style="left:19px;top:0px;width:6px;height:44px;background:#a85034;transform:rotate(6deg);opacity:.8"></div><div class="abs" style="left:31px;top:17px;width:6px;height:2px;background:#7a3828;border-radius:50%"></div></div></div>
<div class="nm" id="nm9" style="left:915.4px">Афанась…</div>
<svg width="10.6" height="10.6" viewBox="0 0 11 11" style="left:979.0px;top:628.4px"><g fill="none" stroke="#f4f4f4" stroke-width="1.3" stroke-linecap="round"><rect x="3.3" y="0.6" width="4.4" height="6.4" rx="2.2" fill="#f4f4f4" stroke="none"/><path d="M1.9 5 a3.6 3.6 0 0 0 7.2 0 M5.5 8.8 v1.4" stroke-width="1.4"/><path d="M1 0.8 L10 10.2" stroke="#292929" stroke-width="2.8"/><path d="M0.8 0.6 L10.2 10.4" stroke-width="1.35"/></g></svg>
<div class="tile" style="left:996.5px;width:90.6px;border-radius:0;height:90.4px;">
<div class="abs" style="left:0;top:0;width:90.6px;height:90.4px;background:#7b83eb"></div><div class="abs" style="left:3.4px;top:3.4px;width:83.8px;height:83.6px;background:linear-gradient(90deg,#a89a9e 0,#a89a9e 2.5%,#2e1a1c 4%,#2e1a1c 20%,#d4c8cc 22%,#dcd0d4 26%,#5e4448 28%,#5e4448 33%,#d8ccd0 35%,#e4d8dc 42%,#d4c8cc 52%,#8a7074 54%,#80686c 72%,#d8ccd0 74%,#d0c0c4 85%,#bcaab0);overflow:hidden"><div class="abs" style="left:2.5px;top:38px;width:38px;height:46px;background:#2a181a"></div><div class="abs" style="left:22px;top:58px;width:62px;height:30px;background:#aea2a2;border-radius:40% 40% 0 0"></div><div class="abs" style="left:36px;top:18px;width:36px;height:42px;background:#34201f;border-radius:50% 50% 40% 40%"></div><div class="abs" style="left:64px;top:42px;width:12px;height:18px;background:#34201f;border-radius:50%"></div><div class="abs" style="left:40px;top:27px;width:28px;height:36px;background:#b08c8a;border-radius:40% 40% 48% 48%"></div><div class="abs" style="left:41px;top:39px;width:11px;height:6px;border:1px solid #7a5a68;border-radius:40%;background:rgba(120,90,130,.35)"></div><div class="abs" style="left:55px;top:39px;width:11px;height:6px;border:1px solid #7a5a68;border-radius:40%;background:rgba(120,90,130,.35)"></div><div class="abs" style="left:49px;top:52px;width:9px;height:3px;background:#7a4048;border-radius:50%"></div><div class="abs" style="left:7px;top:66px;width:76px;height:18px;background:rgba(50,44,48,.5)"></div></div></div>
<div class="nm" id="nm10" style="left:1007.7px">Yakovleva …</div>
<div class="tile" style="left:1091px;width:186px;height:92px"><div class="abs" style="left:72.7px;top:25px;width:41px;height:41px;border-radius:50%;overflow:hidden;background:linear-gradient(#1f70cc,#3a86d8 28%,#dfe6ee 36%,#c8ccc8 50%,#5a6a4a 56%,#c8b088 64%,#dcb47c 80%,#c8a068)"><div class="abs" style="left:2px;top:4px;width:14px;height:9px;background:#e8eef6;border-radius:50%;opacity:.9"></div><div class="abs" style="left:17px;top:20px;width:5px;height:12px;background:#f0e8e0"></div><div class="abs" style="left:17.5px;top:30px;width:1.5px;height:8px;background:#b88868"></div><div class="abs" style="left:20px;top:30px;width:1.5px;height:8px;background:#b88868"></div></div></div></div>
<div id="bar">
<svg width="1280" height="73" viewBox="0 649 1280 73" style="left:0;top:0">
<g fill="none" stroke="#f2f2f2" stroke-width="1.7" stroke-linecap="round" stroke-linejoin="round">
 <!-- chat -->
 <path d="M335.0 690.5 A11 11 0 1 1 339.0 694.6 L333.4 696.3 Z"/>
 <path d="M339.5 682.3 h10.5 M339.5 688 h6.5"/>
 <!-- people -->
 <circle cx="405.8" cy="681" r="3.9"/><circle cx="416.3" cy="682" r="2.6"/>
 <path d="M399.3 688.2 h13 a0 0 0 0 1 0 0 v1 a6.5 4.6 0 0 1 -13 0 z"/>
 <path d="M414.5 688.2 h6.8 v0.6 a4.6 3.4 0 0 1 -6.8 2.6"/>
 <!-- share -->
 <rect x="464.2" y="677.2" width="22" height="16.5" rx="2.3"/>
 <path d="M475.2 690 v-8.6 M471.6 684.6 l3.6 -3.6 l3.6 3.6"/>
 <!-- reactions -->
 <circle cx="544.8" cy="690" r="6.6" fill="#2d2d2d"/>
 <path d="M530.6 679.5 v7 q0 4 4.5 5.6 M530.6 679.5 q0 -1.4 1.3 -1.4 q1.3 0 1.3 1.4 v-3.2 q0 -1.4 1.3 -1.4 q1.3 0 1.3 1.4 v-0.6 q0 -1.4 1.3 -1.4 q1.3 0 1.3 1.4 v1.2 q0 -1.3 1.3 -1.3 q1.3 0 1.3 1.4 v5.6" stroke-width="1.5"/>
 <path d="M533.2 677 v6 M535.8 676 v7 M538.4 677 v6" stroke-width="1.2"/>
 <circle cx="542.5" cy="688.6" r="0.6" fill="#f2f2f2"/><circle cx="547.1" cy="688.6" r="0.6" fill="#f2f2f2"/>
 <path d="M541.8 691.6 q3 2.6 6 0" stroke-width="1.4"/>
 <!-- grid -->
 <rect x="596.2" y="675.6" width="8" height="8" rx="1.8"/><rect x="607.4" y="675.6" width="8" height="8" rx="1.8"/>
 <rect x="596.2" y="686.8" width="8" height="8" rx="1.8"/><rect x="607.4" y="686.8" width="8" height="8" rx="1.8"/>
</g>
<rect x="639.3" y="660" width="1.6" height="50" fill="#8c8c8c"/>
<!-- video off -->
<g fill="#f2f2f2">
 <rect x="662" y="677.5" width="15.5" height="15.5" rx="2.6"/>
 <path d="M678.5 683.2 l5.2 -3.7 q1.2 -0.6 1.2 0.8 v10 q0 1.4 -1.2 0.8 l-5.2 -3.7 z"/>
</g>
<path d="M662 674.5 L685 697" stroke="#2d2d2d" stroke-width="4.2"/>
<path d="M662.4 674.8 L684.6 696.6" stroke="#f2f2f2" stroke-width="1.6" stroke-linecap="round"/>
<!-- mic off -->
<rect x="734.8" y="673.6" width="8" height="14.5" rx="4" fill="#f2f2f2"/>
<path d="M731.6 684 a7.2 7.2 0 0 0 14.4 0 M738.8 691.4 v4.6" stroke="#f2f2f2" stroke-width="1.6" fill="none" stroke-linecap="round"/>
<path d="M727.6 674 L749.8 696.4" stroke="#2d2d2d" stroke-width="4.2"/>
<path d="M728 674.4 L749.4 696" stroke="#f2f2f2" stroke-width="1.6" stroke-linecap="round"/>
<!-- speaker -->
<path d="M792.6 680.6 h4.4 l6.8 -5.4 q1.4 -0.8 1.4 0.8 v18.6 q0 1.6 -1.4 0.8 l-6.8 -5.4 h-4.4 q-0.8 0 -0.8 -0.8 v-7.8 q0 -0.8 0.8 -0.8 z" fill="#f2f2f2"/>
<path d="M808.4 680.4 q2 4.9 0 9.8 M811.4 677.4 q3.4 7.9 0 15.8" stroke="#f2f2f2" stroke-width="1.7" fill="none" stroke-linecap="round"/>
<!-- dots -->
<circle cx="861.3" cy="685.5" r="2.6" fill="#f2f2f2"/><circle cx="869.1" cy="685.5" r="2.6" fill="#f2f2f2"/><circle cx="876.7" cy="685.5" r="2.6" fill="#f2f2f2"/>
<circle cx="877.8" cy="676.6" r="4.4" fill="#7b83eb"/>
<!-- hangup -->
<rect x="905.6" y="656.6" width="58" height="57.2" rx="5.5" fill="#a5193c"/>
<path d="M922.8 688.5 q-0.6 -8 11.6 -8.2 q12.2 0.2 11.6 8.2 q-0.1 1.600 -1.800 1.900 l-3.600 0.600 q-1.700 0.200 -2 -1.500 l-0.300 -2.300 q-0.200 -1.200 -1.600 -1.500 q-2.300 -0.500 -4.600 0 q-1.400 0.300 -1.600 1.500 l-0.300 2.300 q-0.300 1.700 -2 1.500 l-3.600 -0.600 q-1.700 -0.300 -1.800 -1.900 z" fill="#fff"/>
</svg>
</div>
<div id="nav">
<svg width="1280" height="46" viewBox="0 722 1280 46" style="left:0;top:0">
<!-- app drawer dots -->
<g fill="#fff"><circle cx="510.5" cy="739.0" r="1.45"/><circle cx="510.5" cy="745.5" r="1.45"/><circle cx="510.5" cy="752.0" r="1.45"/><circle cx="517.0" cy="739.0" r="1.45"/><circle cx="517.0" cy="745.5" r="1.45"/><circle cx="517.0" cy="752.0" r="1.45"/><circle cx="523.5" cy="739.0" r="1.45"/><circle cx="523.5" cy="745.5" r="1.45"/><circle cx="523.5" cy="752.0" r="1.45"/></g>
<!-- chrome -->
<rect x="546.7" y="730.5" width="30" height="30" rx="11" fill="#fff"/>
<circle cx="561.7" cy="745.5" r="9.6" fill="#e33b2e"/>
<path d="M561.7 745.5 L553.4 750.3 A9.6 9.6 0 0 0 561.7 755.1 A9.6 9.6 0 0 0 570 740.7 Z" fill="#f9bc15"/>
<path d="M561.7 745.5 L553.4 740.7 A9.6 9.6 0 0 0 561.7 755.1 L566 747.6 Z" fill="#2da94f"/>
<path d="M561.7 745.5 L570 740.7 A9.6 9.6 0 0 1 561.7 755.1 L566 748 Z" fill="#f9bc15"/>
<circle cx="561.7" cy="745.5" r="4.6" fill="#fff"/><circle cx="561.7" cy="745.5" r="3.6" fill="#4285f4"/>
<!-- samsung internet -->
<rect x="594.2" y="730.5" width="30" height="30" rx="11" fill="#6b6fd9"/>
<g transform="translate(609.2,745.5) rotate(28)">
<ellipse cx="0" cy="0" rx="11.6" ry="3.8" fill="none" stroke="#fff" stroke-width="1.5"/>
<circle cx="0" cy="0" r="7.4" fill="#fff"/>
<path d="M-11.6 0 A11.6 3.8 0 0 0 11.6 0" fill="none" stroke="#6b6fd9" stroke-width="1.9"/>
<path d="M-11.6 0 A11.6 3.8 0 0 0 -7 3.03 M11.6 0 A11.6 3.8 0 0 1 7 3.03" fill="none" stroke="#fff" stroke-width="1.5"/>
</g>
<!-- teams -->
<rect x="641.7" y="730.5" width="30" height="30" rx="11" fill="#fff"/>
<circle cx="666" cy="741.4" r="2.4" fill="#5059c9"/><rect x="662.4" y="744.4" width="6.6" height="8.6" rx="2" fill="#5059c9"/>
<circle cx="659.3" cy="740" r="3.4" fill="#7b83eb"/><rect x="653" y="744.4" width="11.6" height="11" rx="2.6" fill="#7b83eb"/>
<rect x="646.4" y="741.8" width="10.4" height="10.4" rx="1.4" fill="#4b53bc"/>
<path d="M648.8 744.6 h5.600 M651.6 744.6 v5.400" stroke="#fff" stroke-width="1.3"/>
<circle cx="670" cy="733.9" r="6.8" fill="#e8622a"/>
<path d="M668.800 732 l1.800 -1.200 v6.600" stroke="#fff" stroke-width="1.3" fill="none"/>
<!-- youtube -->
<rect x="689.2" y="730.5" width="30" height="30" rx="11" fill="#fff"/>
<rect x="693.4" y="738.3" width="21.6" height="14.6" rx="4" fill="#e8132c"/>
<path d="M701.6 742 l6.200 3.600 l-6.200 3.600 z" fill="#fff"/>
<rect x="733.700" y="736.3" width="1" height="18.200" fill="#9a9a9a"/>
<!-- telegram -->
<rect x="751.7" y="730.5" width="30" height="30" rx="11" fill="#fff"/>
<circle cx="766.7" cy="745.5" r="12.3" fill="#35a4de"/>
<path d="M759.200 745.400 l14.200 -5.800 q1 -0.300 0.800 0.800 l-2.400 11.200 q-0.300 1 -1.200 0.500 l-3.700 -2.700 l-1.900 1.800 q-0.500 0.400 -0.600 -0.200 l0.300 -3.100 l6.600 -6 l-8.200 5.100 l-3.700 -1.100 q-0.800 -0.300 -0.200 -0.500 z" fill="#fff"/>
<!-- nav buttons -->
<g stroke="#f4f4f4" stroke-width="1.500" fill="none" stroke-linecap="round" stroke-linejoin="round">
<path d="M989.500 738.400 v14.400 M995.500 738.400 v14.400 M1001.500 738.400 v14.400"/>
<rect x="1085.400" y="738.600" width="13.800" height="14" rx="4.200"/>
<path d="M1192.800 738.200 l-7.400 7.400 l7.400 7.400"/>
</g>
</svg>
</div>
</body></html>
